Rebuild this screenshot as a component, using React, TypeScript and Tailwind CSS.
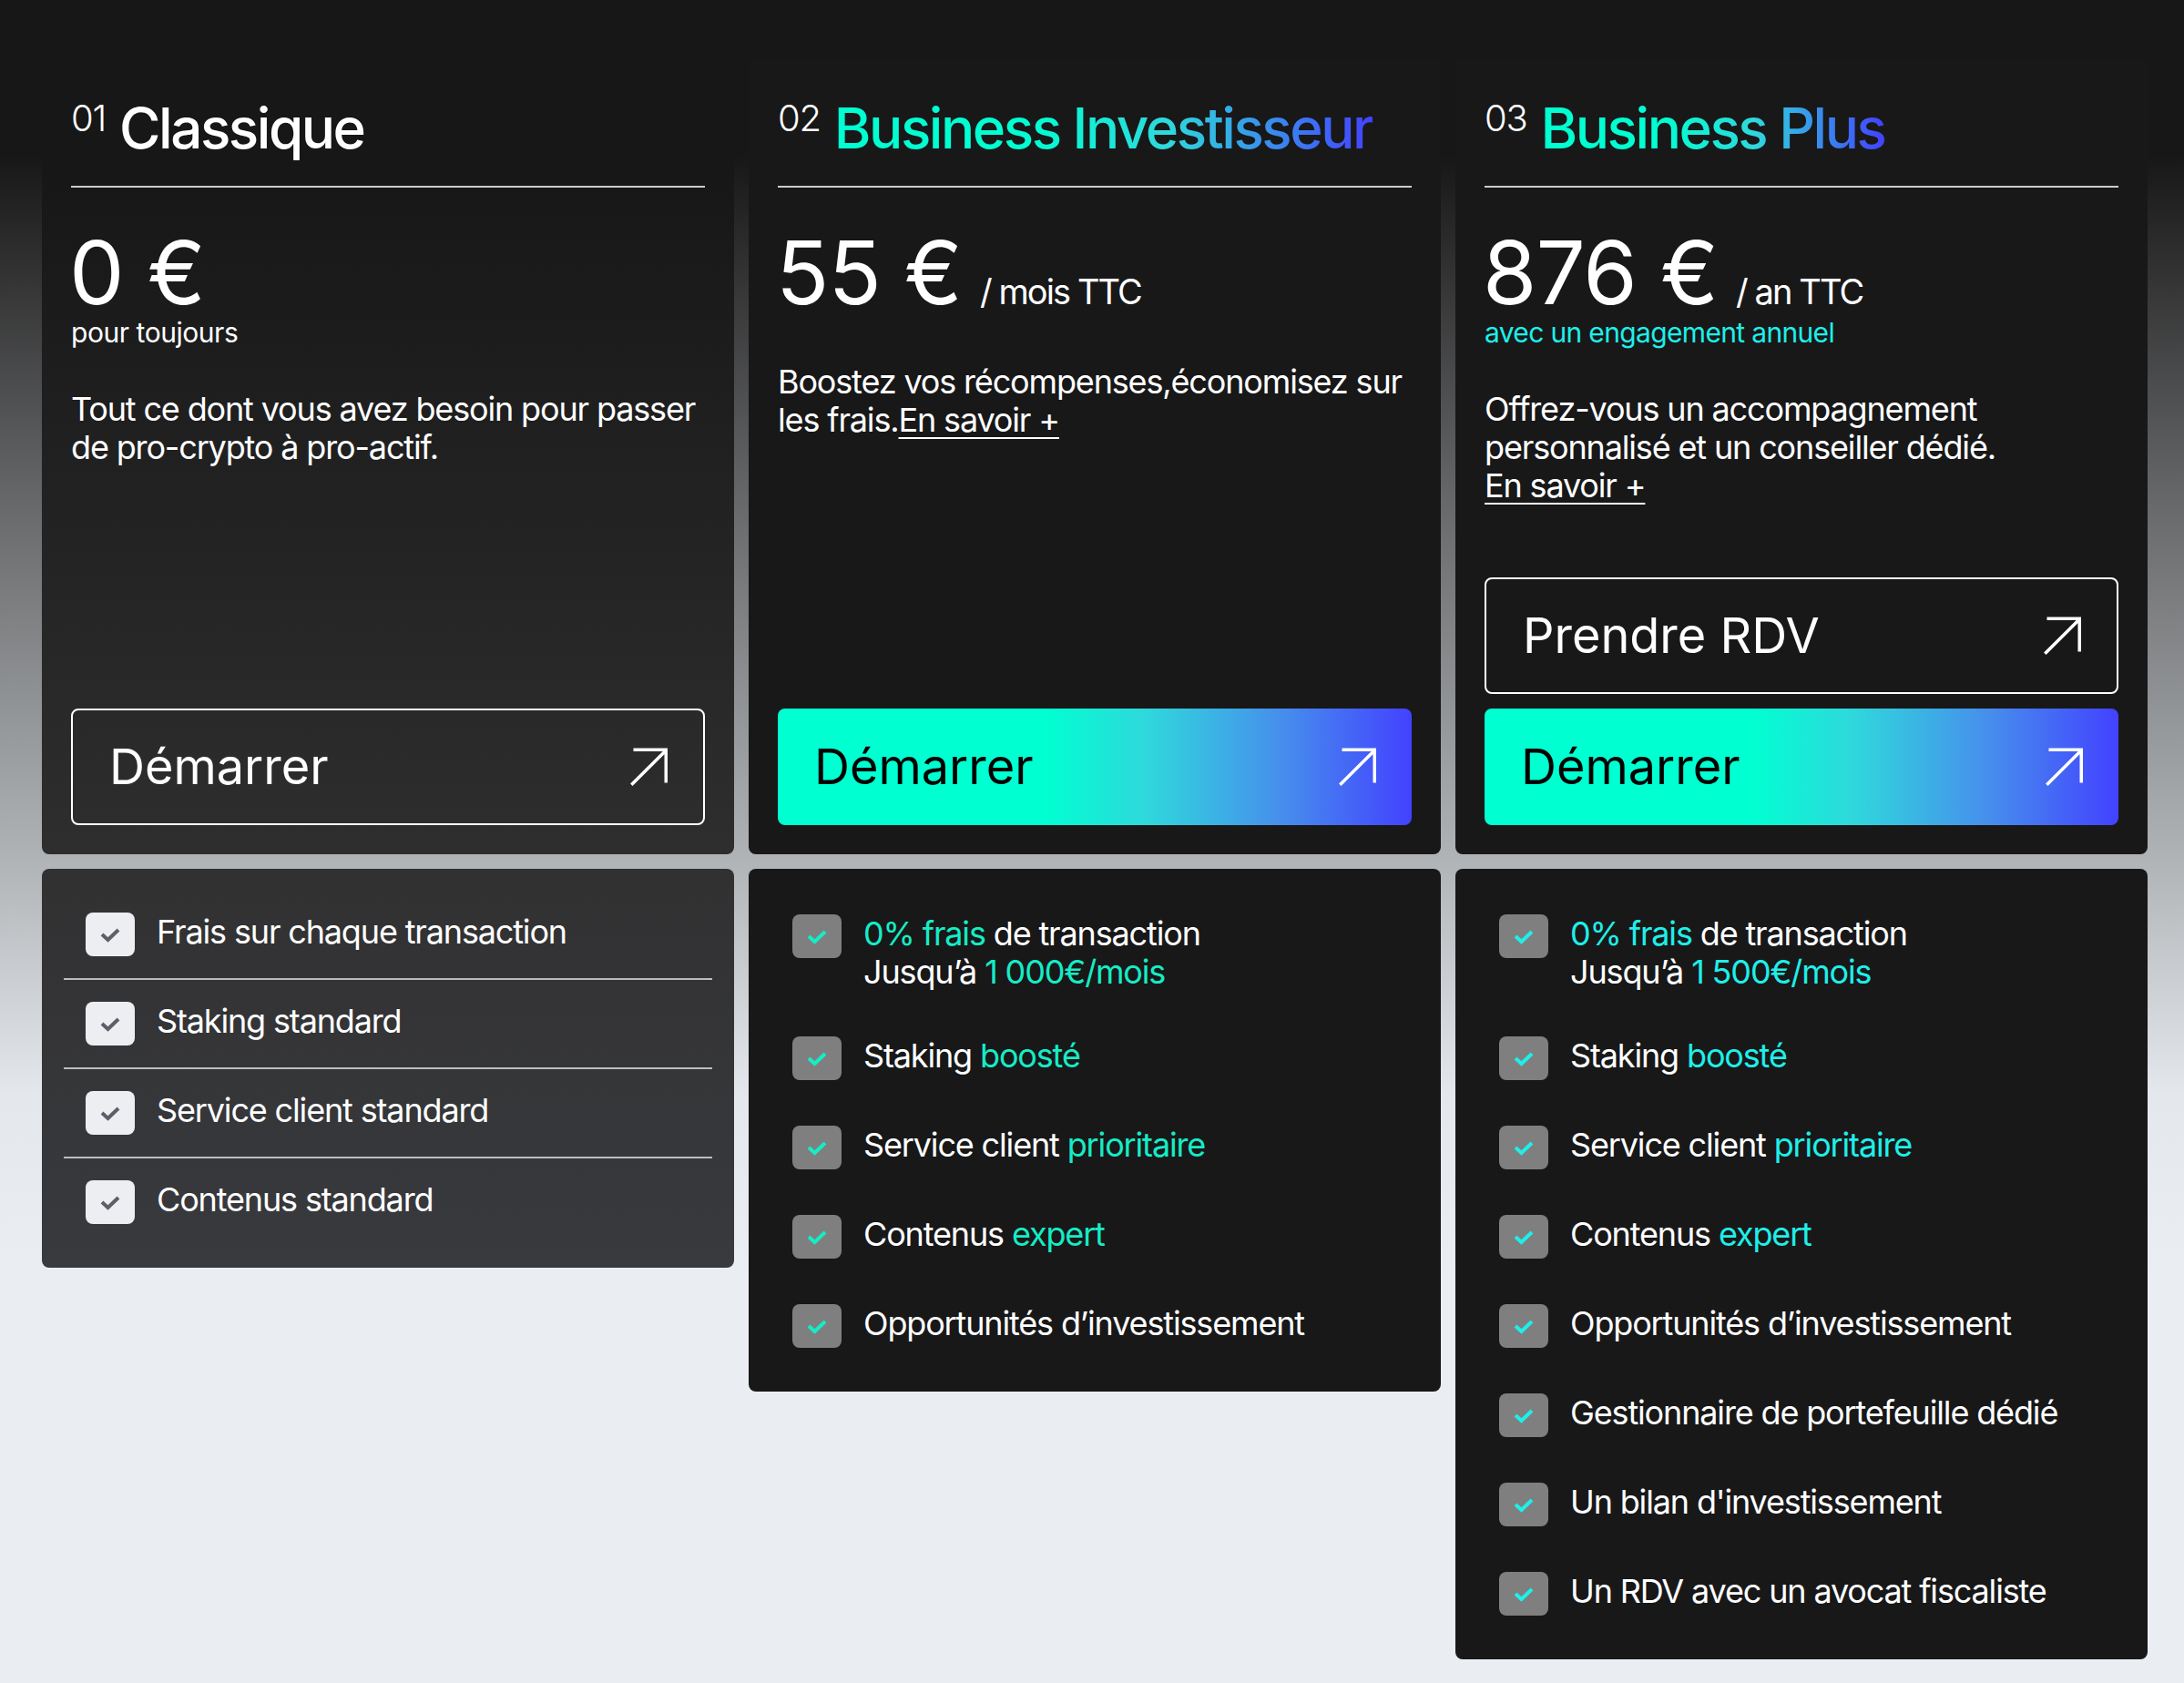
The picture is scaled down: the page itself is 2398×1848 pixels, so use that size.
const cyanCard = "text-[#1fefe9]";
const greenCard = "text-[#16ecc6]";

// arrow of the buttons
function Arrow() {
  return (
    <svg width="44" height="44" viewBox="0 0 40 40" fill="none" stroke="currentColor" strokeWidth="3.2" className="shrink-0">
      <path d="M3 38 L37 4 M5 3 H37.5 V36" />
    </svg>
  );
}

function Check({ color }: { color: string }) {
  return (
    <svg width="22" height="17" viewBox="0 0 22 17" fill="none" stroke="currentColor" strokeWidth="4" className={color}>
      <path d="M2 8 L8.5 14 L20 3" />
    </svg>
  );
}

function Box({ light, color }: { light?: boolean; color: string }) {
  return (
    <div className={`flex h-12 w-[54px] shrink-0 items-center justify-center rounded-lg ${light ? "bg-[#eceef2]" : "bg-[#7f7f7f]"}`}>
      <Check color={color} />
    </div>
  );
}

function Button({ label, gradient }: { label: string; gradient?: boolean }) {
  if (gradient) {
    return (
      <button className="flex h-[128px] w-full items-center justify-between rounded-lg bg-[linear-gradient(90deg,#00ffd1_42%,#2fd8dc_58%,#4690ec_79%,#4342ff_100%)] pl-10 pr-[26px] text-[54px] leading-none text-black">
        <span className="-mt-px">{label}</span>
        <span className="flex pr-3 text-white"><Arrow /></span>
      </button>
    );
  }
  return (
    <button className="flex h-[128px] w-full items-center justify-between rounded-lg border-2 border-white pl-[40px] pr-[26px] text-[54px] leading-none text-white">
      <span className="-mt-px">{label}</span>
      <span className="flex pr-3"><Arrow /></span>
    </button>
  );
}

function Title({ num, name, gradient }: { num: string; name: string; gradient?: boolean }) {
  return (
    <div className="flex h-[96px] items-start gap-[15px] border-b-2 border-[#c9ccd0]">
      <span className="-mt-1 text-[40px] font-light leading-[48px] tracking-[-0.03em] text-white">{num}</span>
      <span
        className={`-mt-[6px] text-[62px] font-medium leading-[74px] tracking-[-0.04em] ${gradient ? "bg-[linear-gradient(90deg,#00ffd1_35%,#2fd8dc_62%,#4342ff_100%)] bg-clip-text text-transparent" : "text-white"}`}
      >
        {name}
      </span>
    </div>
  );
}

function Price({ value, unit }: { value: string; unit?: string }) {
  return (
    <div className="-ml-[2px] mt-[46px] flex items-baseline gap-5 text-white">
      <span className="text-[96px] leading-[95px] tracking-[-0.01em]">{value}</span>
      {unit && <span className="text-[38px] leading-none tracking-[-0.05em]">{unit}</span>}
    </div>
  );
}

function More() {
  return <span className="underline decoration-2 underline-offset-[6px]">En savoir +</span>;
}

function Row({ children, top }: { children: React.ReactNode; top?: boolean }) {
  return (
    <div className={`flex gap-6 text-[36px] leading-[42px] tracking-[-0.032em] text-white ${top ? "items-start" : "items-center"}`}>
      {children}
    </div>
  );
}

const classique = ["Frais sur chaque transaction", "Staking standard", "Service client standard", "Contenus standard"];

function Features({ accent, limit, extra }: { accent: string; limit: string; extra?: boolean }) {
  const t = "-mt-[6px]";
  return (
    <div className="flex flex-col gap-[50px] rounded-lg bg-[#181819] px-12 pb-12 pt-[50px]">
      <Row top>
        <Box color={accent} />
        <div>
          <div><span className={accent}>0% frais</span> de transaction</div>
          <div>Jusqu’à <span className={accent}>{limit}</span></div>
        </div>
      </Row>
      <Row><Box color={accent} /><span className={t}>Staking <span className={accent}>boosté</span></span></Row>
      <Row><Box color={accent} /><span className={t}>Service client <span className={accent}>prioritaire</span></span></Row>
      <Row><Box color={accent} /><span className={t}>Contenus <span className={accent}>expert</span></span></Row>
      <Row><Box color={accent} /><span className={t}>Opportunités d’investissement</span></Row>
      {extra && (
        <>
          <Row><Box color={accent} /><span className={t}>Gestionnaire de portefeuille dédié</span></Row>
          <Row><Box color={accent} /><span className={t}>Un bilan d'investissement</span></Row>
          <Row><Box color={accent} /><span className={t}>Un RDV avec un avocat fiscaliste</span></Row>
        </>
      )}
    </div>
  );
}

export default function App() {
  return (
    <div className="grid min-h-[1848px] w-[2398px] grid-cols-[760px_760px_760px] items-start gap-x-4 bg-[linear-gradient(180deg,#171717_0px,#171717_170px,#6d6e70_580px,#b1b5b8_950px,#e4e7eb_1200px,#eaedf2_1400px)] pl-[46px] pt-16 font-['Inter',sans-serif]">
      {/* 01 */}
      <div className="flex flex-col gap-4">
        <div className="flex h-[874px] flex-col rounded-lg bg-[linear-gradient(180deg,#171717_15%,#2e2e2f_100%)] px-8 pb-8 pt-[46px]">
          <Title num="01" name="Classique" />
          <Price value="0 €" />
          <div className="text-[30px] leading-9 tracking-[-0.015em] text-white">pour toujours</div>
          <p className="mt-[45px] text-[36px] leading-[42px] tracking-[-0.032em] text-white">
            Tout ce dont vous avez besoin pour passer de pro-crypto à pro-actif.
          </p>
          <div className="mt-auto"><Button label="Démarrer" /></div>
        </div>
        <div className="rounded-lg bg-[linear-gradient(180deg,#313132_0%,#393a3e_100%)] px-6 pb-6 pt-6">
          {classique.map((t, i) => (
            <div
              key={t}
              className={`flex items-center gap-6 pl-6 text-[36px] tracking-[-0.032em] text-white ${i < 3 ? "h-[98px] border-b-2 border-[#b9bdc1]" : "h-[96px]"}`}
            >
              <Box light color="text-[#5c5f68]" />
              <span className="-mt-[6px]">{t}</span>
            </div>
          ))}
        </div>
      </div>

      {/* 02 */}
      <div className="flex flex-col gap-4">
        <div className="flex h-[874px] flex-col rounded-lg bg-[#181819] px-8 pb-8 pt-[46px]">
          <Title num="02" name="Business Investisseur" gradient />
          <Price value="55 €" unit="/ mois TTC" />
          <p className="mt-[51px] text-[36px] leading-[42px] tracking-[-0.032em] text-white">
            Boostez vos récompenses,économisez sur les frais.<More />
          </p>
          <div className="mt-auto"><Button label="Démarrer" gradient /></div>
        </div>
        <Features accent={greenCard} limit="1 000€/mois" />
      </div>

      {/* 03 */}
      <div className="flex flex-col gap-4">
        <div className="flex h-[874px] flex-col rounded-lg bg-[#181819] px-8 pb-8 pt-[46px]">
          <Title num="03" name="Business Plus" gradient />
          <Price value="876 €" unit="/ an TTC" />
          <div className={`text-[30px] leading-9 tracking-[-0.022em] ${cyanCard}`}>avec un engagement annuel</div>
          <p className="mt-[45px] text-[36px] leading-[42px] tracking-[-0.032em] text-white">
            Offrez-vous un accompagnement personnalisé et un conseiller dédié.<br /><More />
          </p>
          <div className="mt-auto flex flex-col gap-4">
            <Button label="Prendre RDV" />
            <Button label="Démarrer" gradient />
          </div>
        </div>
        <Features accent={cyanCard} limit="1 500€/mois" extra />
      </div>
    </div>
  );
}
